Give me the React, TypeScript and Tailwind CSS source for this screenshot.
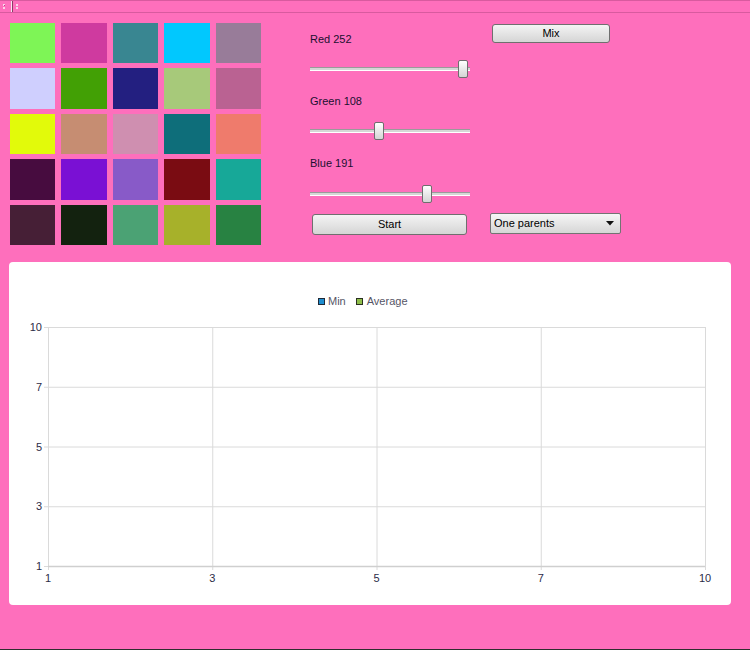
import React from "react";

const swatches = [
  ["#7ef556", "#cf3a9f", "#398691", "#01c8fe", "#987c99"],
  ["#cfcffe", "#42a005", "#231f80", "#a7c97a", "#ba6292"],
  ["#e2fa0a", "#c68d72", "#cf8fb0", "#0e6e7a", "#ef7b6c"],
  ["#470c3f", "#7a10d4", "#885ac8", "#7a0c12", "#17a898"],
  ["#461f36", "#13220f", "#4ba274", "#a7b12a", "#288242"],
];

function Slider({ value }: { value: number }) {
  const left = Math.round((value / 255) * 150);
  return (
    <div className="relative w-[160px] h-[18px]">
      <div className="absolute left-0 right-0 top-[7px] h-[4px] flex flex-col">
        <div className="h-[1px] bg-[#9a9a9a]" />
        <div className="h-[2px] bg-[#d6d6d6]" />
        <div className="h-[1px] bg-white" />
      </div>
      <div
        className="absolute top-0 w-[10px] h-[18px] rounded-[2px] border border-[#6e6e6e] bg-gradient-to-b from-[#ffffff] to-[#d4d4d4]"
        style={{ left }}
      />
    </div>
  );
}

function Button({ label, className }: { label: string; className: string }) {
  return (
    <div
      className={
        "flex items-center justify-center rounded-[3px] border border-[#6f6f6f] bg-gradient-to-b from-[#f4f4f4] to-[#d5d5d5] text-black text-[11px] " +
        className
      }
    >
      {label}
    </div>
  );
}

export default function App() {
  const xs = [0, 164.25, 328.5, 492.75, 657];
  const ys = [0, 59.75, 119.5, 179.25, 239];
  const xLabels = ["1", "3", "5", "7", "10"];
  const yLabels = ["10", "7", "5", "3", "1"];
  return (
    <div className="w-[750px] h-[650px] bg-[#fe6fbc] flex flex-col font-['Liberation_Sans',Arial,sans-serif] text-[11px] border-b border-[#2e2e2e] overflow-hidden">
      {/* toolbar */}
      <div className="h-[13px] shrink-0 border-t border-[#555555] border-b border-[#d85a9f] flex items-stretch">
        <div className="w-[11px] relative">
          <div className="absolute left-[3px] top-[3px] w-[2px] h-[2px] bg-[#f9d4ea]" />
          <div className="absolute left-[3px] top-[6px] w-[2px] h-[2px] bg-[#f9d4ea]" />
          <div className="absolute left-[4px] top-[4px] w-[1px] h-[1px] bg-[#c2458a]" />
        </div>
        <div className="w-[1px] bg-[#fbe2f0]" />
        <div className="w-[1px] bg-[#8a3c66]" />
        <div className="w-[10px] relative">
          <div className="absolute left-[3px] top-[3px] w-[2px] h-[2px] bg-[#f9d4ea]" />
          <div className="absolute left-[3px] top-[6px] w-[2px] h-[2px] bg-[#f9d4ea]" />
        </div>
      </div>

      {/* top section */}
      <div className="flex items-start pl-[10px] pt-[10px]">
        <div className="grid grid-cols-[45px_46px_45px_46px_45px] grid-rows-[40px_41px_40px_41px_40px] gap-x-[6px] gap-y-[5px]">
          {swatches.flat().map((c, i) => (
            <div key={i} style={{ backgroundColor: c }} />
          ))}
        </div>

        <div className="ml-[49px] mt-[7px] w-[160px] flex flex-col text-[#1a1030]">
          <div className="h-[18px] leading-[18px]">Red 252</div>
          <div className="mt-[12px]"><Slider value={252} /></div>
          <div className="mt-[14px] h-[18px] leading-[18px]">Green 108</div>
          <div className="mt-[12px]"><Slider value={108} /></div>
          <div className="mt-[14px] h-[18px] leading-[18px]">Blue 191</div>
          <div className="mt-[13px]"><Slider value={191} /></div>
          <Button label="Start" className="mt-[11px] ml-[2px] w-[155px] h-[21px]" />
        </div>

        <div className="ml-[20px] mt-[1px] flex flex-col">
          <Button label="Mix" className="ml-[2px] w-[118px] h-[19px]" />
          <div className="mt-[170px] w-[131px] h-[21px] rounded-[2px] border border-[#737373] bg-gradient-to-b from-[#f6f6f6] to-[#d6d6d6] flex items-center justify-between pl-[3px] pr-[6px] text-black">
            <span>One parents</span>
            <svg width="8" height="5" viewBox="0 0 8 5">
              <path d="M0 0 L8 0 L4 4.5 Z" fill="#111" />
            </svg>
          </div>
        </div>
      </div>

      {/* chart card */}
      <div className="mt-[17px] ml-[9px] w-[722px] h-[343px] bg-white rounded-[4px] flex flex-col">
        <div className="pt-[33px] pl-[309px] flex items-center h-[45px] text-[#555566]">
          <div className="w-[7px] h-[7px] bg-[#1e8ed0] border border-[#1f2a38]" />
          <span className="ml-[3px]">Min</span>
          <div className="ml-[10px] w-[7px] h-[7px] bg-[#8fbe4a] border border-[#2a3020]" />
          <span className="ml-[4px]">Average</span>
        </div>
        <div className="relative ml-[39px] mt-[20px] w-[657px] h-[239px]">
          <svg className="absolute inset-0 overflow-visible" width="657" height="239">
            {xs.map((x, i) => (
              <line key={"vx" + i} x1={x + 0.5} y1={0} x2={x + 0.5} y2={243} stroke="#dadada" strokeWidth="1" />
            ))}
            {ys.map((y, i) => (
              <line key={"hy" + i} x1={-4} y1={y + 0.5} x2={657} y2={y + 0.5} stroke="#dadada" strokeWidth="1" />
            ))}
            <line x1={0} y1={239.5} x2={657} y2={239.5} stroke="#cfcfcf" strokeWidth="1.5" />
          </svg>
          {ys.map((y, i) => (
            <div
              key={"yl" + i}
              className="absolute right-[663px] text-[#2c2c48] leading-[12px]"
              style={{ top: y - 6 }}
            >
              {yLabels[i]}
            </div>
          ))}
          {xs.map((x, i) => (
            <div
              key={"xl" + i}
              className="absolute w-[30px] text-center text-[#2c2c48] leading-[12px] top-[245px]"
              style={{ left: x - 15 }}
            >
              {xLabels[i]}
            </div>
          ))}
        </div>
      </div>
    </div>
  );
}
